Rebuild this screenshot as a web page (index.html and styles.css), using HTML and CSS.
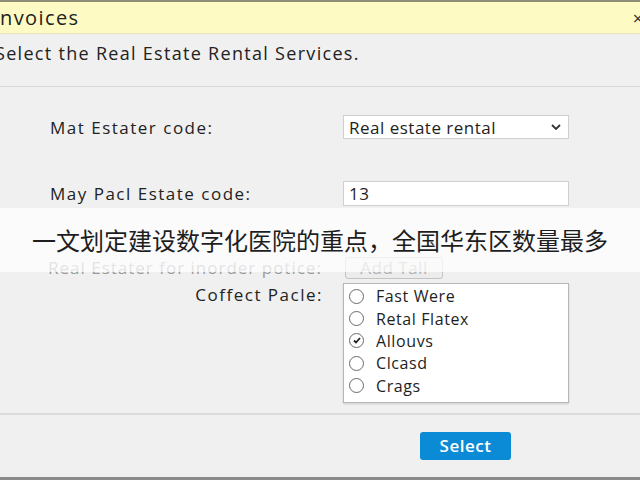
FILE: index.html
```html
<!DOCTYPE html>
<html>
<head>
<meta charset="utf-8">
<link rel="stylesheet" href="styles.css">
</head>
<body>
<div class="window">
  <div class="titlebar">
    <span class="title">Invoices</span>
    <span class="close">×</span>
  </div>
  <div class="intro">Select the Real Estate Rental Services.</div>
  <div class="form">
    <div class="row row1">
      <div class="label">Mat Estater code:</div>
      <div class="select">
        <span>Real estate rental</span>
        <svg class="chev" width="10" height="6" viewBox="0 0 10 6"><path d="M1 1 L5 5 L9 1" fill="none" stroke="#333" stroke-width="1.8"/></svg>
      </div>
    </div>
    <div class="row row2">
      <div class="label">May Pacl Estate code:</div>
      <div class="input">13</div>
    </div>
    <div class="row row3">
      <div class="label faded">Real Estater for inorder potice:</div>
      <div><span class="addbtn">Add Tall</span></div>
    </div>
    <div class="row row4">
      <div class="label right">Coffect Pacle:</div>
      <div class="listbox">
        <div class="opt"><span class="radio"></span>Fast Were</div>
        <div class="opt"><span class="radio"></span>Retal Flatex</div>
        <div class="opt"><span class="radio checked"><svg width="8" height="7" viewBox="0 0 8 7"><path d="M1 3.5 L3 5.5 L7 1" fill="none" stroke="#222" stroke-width="1.8"/></svg></span>Allouvs</div>
        <div class="opt"><span class="radio"></span>Clcasd</div>
        <div class="opt"><span class="radio"></span>Crags</div>
      </div>
    </div>
  </div>
  <div class="footer">
    <span class="primary">Select</span>
  </div>
  <div class="banner">一文划定建设数字化医院的重点，全国华东区数量最多</div>
</div>
</body>
</html>
```
FILE: styles.css
```css
html, body {
  margin: 0;
  padding: 0;
}
body {
  width: 640px;
  height: 480px;
  overflow: hidden;
  background: #f0f0f0;
  font-family: "Open Sans", "Noto Sans", sans-serif;
  color: #1e1e1e;
}
.window {
  position: relative;
  width: 640px;
  height: 480px;
  box-sizing: border-box;
  border-top: 2px solid #8f8d74;
  border-bottom: 3px solid #8a8a8a;
  overflow: hidden;
}
.titlebar {
  height: 31px;
  background: #fdfbc3;
  display: flex;
  align-items: center;
  justify-content: space-between;
  border-bottom: 1px solid #e6e4c0;
}
.title {
  font-size: 20px;
  letter-spacing: 1.4px;
  margin-left: -7px;
  color: #222;
}
.close {
  font-size: 18px;
  margin-right: -3px;
  color: #333;
}
.intro {
  height: 53px;
  box-sizing: border-box;
  padding-top: 7px;
  font-size: 18px;
  letter-spacing: 1.3px;
  margin-left: -5px;
  border-bottom: 1px solid #d9d9d9;
  color: #222;
}
.form {
  padding-top: 28px;
  height: 328px;
  box-sizing: border-box;
  border-bottom: 2px solid #dcdcdc;
}
.row {
  display: grid;
  grid-template-columns: 295px 226px;
  padding-left: 48px;
  align-items: center;
}
.row2 { margin-top: 42px; }
.row3 { margin-top: 50px; }
.row4 { margin-top: 4px; align-items: start; }
.label {
  font-size: 17px;
  letter-spacing: 1.5px;
  padding-left: 2px;
  color: #222;
}
.label.faded { color: #9a9a9a; padding-left: 0; letter-spacing: 1px; }
.label.right {
  text-align: right;
  padding-right: 20px;
  padding-top: 0;
}
.select, .input {
  height: 24px;
  box-sizing: border-box;
  background: #fff;
  border: 1px solid #cfcfcf;
  display: flex;
  align-items: center;
  padding: 0 5px;
  font-size: 17px;
  letter-spacing: 0.5px;
  justify-content: space-between;
}
.input { height: 25px; }
.chev { margin-right: 2px; }
.addbtn {
  display: inline-block;
  margin-left: 2px;
  width: 98px;
  height: 22px;
  box-sizing: border-box;
  border: 1px solid #c4c4c4;
  border-radius: 3px;
  background: #ececec;
  color: #b0b0b0;
  font-size: 17px;
  letter-spacing: 0.5px;
  text-align: center;
  line-height: 20px;
}
.listbox {
  height: 120px;
  box-sizing: border-box;
  background: #fff;
  border: 1px solid #b8b8b8;
  box-shadow: 0 1px 2px rgba(0,0,0,0.15);
  padding-top: 1px;
}
.opt {
  height: 22.4px;
  display: flex;
  align-items: center;
  font-size: 16px;
  letter-spacing: 0.6px;
  padding-left: 5px;
}
.radio {
  width: 15px;
  height: 15px;
  box-sizing: border-box;
  border: 1px solid #6a6a6a;
  border-radius: 50%;
  margin-right: 12px;
  display: flex;
  align-items: center;
  justify-content: center;
}
.footer {
  display: flex;
  padding-top: 17px;
  padding-left: 420px;
}
.primary {
  width: 91px;
  height: 28px;
  background: #0b8ad6;
  border-radius: 3px;
  color: #fff;
  font-size: 17px;
  font-weight: 600;
  letter-spacing: 0.5px;
  text-align: center;
  line-height: 28px;
}
.banner {
  position: absolute;
  left: 0;
  top: 206px;
  width: 640px;
  height: 64px;
  background: rgba(255,255,255,0.72);
  font-family: "Noto Sans CJK SC", sans-serif;
  font-size: 24px;
  color: #1e1e1e;
  text-align: center;
  line-height: 64px;
}
```
